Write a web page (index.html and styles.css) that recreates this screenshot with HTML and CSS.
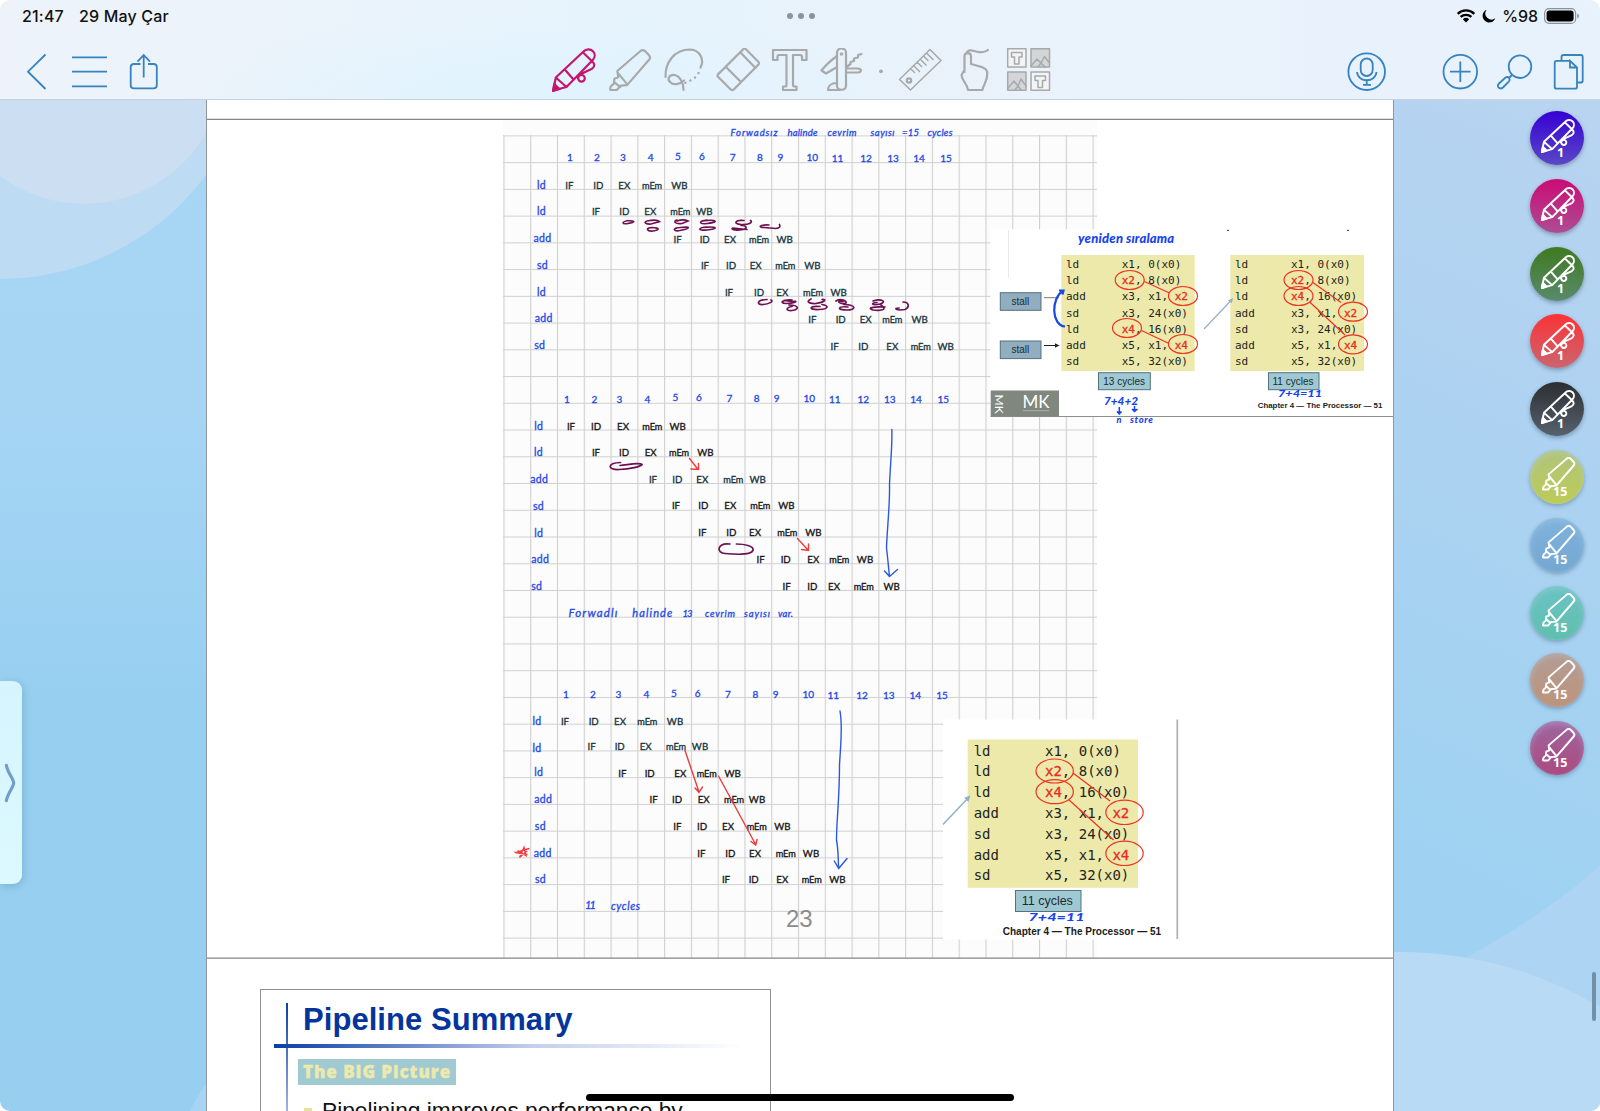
FILE: index.html
```html
<!DOCTYPE html>
<html lang="tr">
<head>
<meta charset="utf-8">
<title>Notes</title>
<link rel="stylesheet" href="styles.css">
</head>
<body>
<svg class="defs" width="0" height="0">
  <defs>
    <symbol id="pen" viewBox="0 0 44 44">
      <path d="M1.2 42.5 L3.8 29.5 L31.5 3.5 C34 .8 38.5 .6 41 3.2 C43.4 5.8 43 9.6 40.8 12 L14.5 39 Z M3.8 29.5 L14.5 39 M12.8 21.5 L21.5 31.500 M31 4.500 L39.8 13 M39.8 13 C43 16 43.200 18.500 40 20.800 L30 25.500 C25.500 27.500 25 30 26.500 31.500 M32.800 30.300 A3.300 3.300 0 1 1 26.200 30.300 A3.300 3.300 0 1 1 32.800 30.300"/>
      <path class="tip" d="M1 43 L2.300 36 L7.500 41 Z"/>
    </symbol>
    <symbol id="marker" viewBox="0 0 44 44">
      <path d="M8.500 22.500 L32.500 1.800 C34 .8 35.500 .8 37 2.200 L41 6.500 C42.300 8 42.300 9.500 41 11 L18.500 37 L12 37.500 L8 42 L1.500 42 C.8 40 2 37.500 5 35.500 L5.500 30.500 L9.500 29 Z M9.500 25 L18.500 36 M5.500 34 L11.500 39"/>
    </symbol>
  </defs>
</svg>

<header class="topbar">
  <div class="status">
    <div class="clock"><span>21:47</span><span>29 May Çar</span></div>
    <div class="dots"><i></i><i></i><i></i></div>
    <div class="indicators">
      <svg width="20" height="14" viewBox="0 0 20 14"><path class="wave" d="M1.700 4.800 A12 12 0 0 1 18.300 4.800 M4.600 7.900 A8 8 0 0 1 15.400 7.900"/><path d="M10 13.500 L6.800 10.200 A4.700 4.700 0 0 1 13.200 10.200 Z"/></svg>
      <svg width="14" height="14" viewBox="0 0 14 14"><path d="M4.500 .8 A6.600 6.600 0 1 0 13.300 9.300 A6.200 6.200 0 0 1 4.500 .8 Z"/></svg>
      <span>%98</span>
      <svg width="36" height="16" viewBox="0 0 36 16"><rect class="shell" x=".6" y=".6" width="31" height="14.800" rx="4.500"/><rect x="2.600" y="2.600" width="27" height="10.800" rx="2.800"/><path class="nub" d="M33.300 5.500 C35.500 6.500 35.500 9.500 33.300 10.500 Z"/></svg>
    </div>
  </div>
  <div class="toolbar">
    <div class="group left">
      <svg width="140" height="44" viewBox="22 48 140 44"><path d="M45.500 54.500 L28 71.700 L45.500 89 M72 57.300 H107 M72 71.700 H107 M72 86.300 H107 M140.500 64 H134 Q130.700 64 130.700 67.300 V85 Q130.700 88.400 134 88.400 H153.500 Q156.800 88.400 156.800 85 V67.300 Q156.800 64 153.500 64 H148 M143.700 77.500 V55 M137.500 61.700 L143.700 55 L150 61.700"/></svg>
    </div>
    <div class="group tools">
      <svg class="active" width="54" height="44" viewBox="-5 0 54 44"><use href="#pen" width="44" height="44"/></svg>
      <svg width="54" height="44" viewBox="-8 -1 54 44"><use href="#marker" width="43" height="43"/></svg>
      <svg width="54" height="44" viewBox="655 48 54 44"><path d="M665.500 77 C665 63 674 49.500 690 49.500 C700.500 50 704.500 60 700.500 67.500 M683.500 90 C683.500 83 680 76 674.500 75 C669 74.500 667 79 670 82 C674 86 680 84 684 80.500"/><path class="dash" d="M698.500 73 L695 77.500 L689 81.500 L682 84"/></svg>
      <svg width="54" height="44" viewBox="709 48 54 44"><path d="M743.500 49 Q744.600 48 745.700 49 L758.500 62 Q759.500 63.200 758.500 64.400 L733.500 89.700 Q732.300 90.700 731 89.700 L718 76.800 Q717 75.600 718 74.400 Z M725.500 66.500 L741 82 M740.500 52.500 L755.500 68"/></svg>
      <svg width="54" height="44" viewBox="763 48 54 44"><path d="M773 50 H806.500 V60 H802 V56.500 Q802 55 800.500 55 H793 V85 Q793 86.500 795 86.500 H796.500 V90 H783 V86.500 H785 Q786.500 86.500 786.500 85 V55 H779 Q777.500 55 777.500 56.500 V60 H773 Z"/></svg>
      <svg width="54" height="44" viewBox="817 48 54 44"><path d="M837 53 C837 47 846 47 846 53 V86 C846 91 837 91 837 86 Z M837 56 C830 61 825 66 821.500 70.500 L826 73.500 L837 67 M837 83 C831 83 828 86 828 90 H840 M846 68.500 H858 Q861 69 861 70.500 Q861 72 858 72.500 H846 M847 66.500 L850.500 64 V62 L854 61 V58.500 L858 57.500 V55 L861.500 54"/><circle cx="841.500" cy="54" r=".7"/></svg>
      <svg width="24" height="44" viewBox="871 48 24 44"><circle class="fill" cx="881" cy="71.300" r="1.900"/></svg>
      <svg width="54" height="44" viewBox="895 48 54 44"><path class="thin" d="M930 49.500 L941 60.500 L910.500 90 L899.500 79.500 Z M926.500 53 L933 59.500 M923.500 56 L928 60.500 M920 59 L926 65 M917 62 L921.500 66.500 M913.500 65.500 L919.500 71.500 M910.500 68.500 L914.500 72.500"/><circle cx="909" cy="80.500" r="2.200"/></svg>
      <svg width="54" height="44" viewBox="949 48 54 44"><path d="M964.500 72 V56.500 C964.500 52 971 52 971 56.500 V64 L980 66.500 C985.500 68 987.300 70 987.300 73 C987.500 83 983 84 982.500 90 H968 C967.500 84 962 81 961.500 75 L964.500 70 M966.500 53 C969 47.500 975 52 980 52.200 Q985 52.500 988 50"/></svg>
      <svg width="54" height="44" viewBox="1003 48 54 44"><path class="tilebg" d="M1007.700 48.700 H1026 V67 H1007.700 Z M1031 72 H1049.500 V90.300 H1031 Z"/><path class="tiledark" d="M1031 48.700 H1049.500 V67 H1031 Z M1007.700 72 H1026 V90.300 H1007.700 Z"/><path class="thin" d="M1011.500 52.500 H1022 V57 H1019 V64 H1014.500 V57 H1011.500 Z M1035 76 H1045.500 V80.500 H1042.500 V87.500 H1038 V80.500 H1035 Z M1031 66 L1037 59 L1041 63 L1044.500 56.500 L1049.500 63 M1038 67 L1041 63 L1045 67 M1008 88 L1014 81 L1018 86 L1021 79 L1026 86 M1015 90 L1018 86 L1021 90"/></svg>
    </div>
    <div class="group right">
      <svg width="252" height="44" viewBox="1342 48 252 44"><circle cx="1366.700" cy="71.700" r="18.300"/><rect x="1360.700" y="58.500" width="12" height="17.500" rx="6"/><path d="M1357 72 C1358 83 1375.500 83 1376.500 72 M1366.700 80 V84.500 M1363 84.800 H1371"/><circle cx="1460.300" cy="71.700" r="16.800"/><path d="M1450 71.700 H1470.600 M1460.300 61.400 V82"/><circle cx="1520" cy="66.700" r="11.300"/><path d="M1512 75 L1509 78 M1499 83.500 L1505.500 77.500 Q1507.500 76.300 1509 78 Q1510.200 79.700 1509 81.300 L1503 87.500 Q1500.500 89.500 1498.500 87.300 Q1497 85.500 1499 83.500 Z M1561.500 60 V57 Q1561.500 55 1563.500 55 H1581 Q1582.700 55 1582.700 57 V80.500 Q1582.700 82.500 1581 82.500 H1577.500 M1570 60.800 H1556.500 Q1554.700 60.800 1554.700 62.600 V87 Q1554.700 88.700 1556.500 88.700 H1575 Q1577 88.700 1577 87 V67.500 L1570 60.800 V67.500 H1577"/></svg>
    </div>
  </div>
</header>

<main class="desk">
  <aside class="margin">
    <svg width="206" height="1011" viewBox="0 100 206 1011"><circle class="c1" cx="0" cy="23" r="256"/><circle class="c2" cx="84" cy="64" r="140"/><path class="c3" d="M190 1111 Q197 1096 206 1084 V1111 Z"/></svg>
    <div class="handle"><svg width="22" height="44" viewBox="0 0 22 44"><path d="M6.500 4 C8 12 14 18 14 22 C14 26 8 32 6.500 40"/></svg></div>
  </aside>

  <section class="paper">
    <svg class="sheet" width="1186" height="859" viewBox="207 100 1186 859">
      <defs>
        <pattern id="grid" x="503.400" y="135.400" width="26.780" height="26.740" patternUnits="userSpaceOnUse"><path class="gridline" d="M.5 0 V27 M0 .5 H27"/></pattern>
        <marker id="dot" viewBox="0 0 6 6" refX="4" refY="3" markerWidth="4.500" markerHeight="4.500" orient="auto"><path fill="#222" stroke="none" d="M0 0 L6 3 L0 6 Z"/></marker>
        <marker id="soft" viewBox="0 0 6 6" refX="4" refY="3" markerWidth="4" markerHeight="4" orient="auto"><path fill="#8fb0c6" stroke="none" d="M0 0 L6 3 L0 6 Z"/></marker>
      </defs>
      <rect x="503" y="119" width="594" height="839" fill="#fcfcfc"/>
      <rect x="503" y="135" width="594" height="823" fill="url(#grid)"/>
      <path class="pageline" d="M207 119.300 H1393 M207 958.200 H1393"/>

      <g class="pen blue">
        <g class="note"><text x="730.500" y="136" textLength="47">Forwadsız</text><text x="787.500" y="136" textLength="30">halinde</text><text x="827.500" y="136" textLength="29">cevrim</text><text x="870.500" y="136" textLength="24">sayısı</text><text x="902" y="136" textLength="17">=15</text><text x="927.500" y="136" textLength="25">cycles</text></g>
        <text class="num" y="161.300"><tspan x="570">1</tspan><tspan x="597">2</tspan><tspan x="623">3</tspan><tspan x="650.700">4</tspan><tspan x="678" dy="-1.500">5</tspan><tspan x="702">6</tspan><tspan x="732.700" dy="1">7</tspan><tspan x="760">8</tspan><tspan x="780.300">9</tspan><tspan x="812.300">10</tspan><tspan x="837.500" dy="1">11</tspan><tspan x="866">12</tspan><tspan x="893">13</tspan><tspan x="919">14</tspan><tspan x="946">15</tspan></text>
        <g class="op"><text x="541.500" y="188.500">ld</text><text x="541.500" y="215">ld</text><text x="542.500" y="242">add</text><text x="542.500" y="269">sd</text><text x="541.500" y="296">ld</text><text x="543.700" y="322">add</text><text x="539.700" y="349.300">sd</text></g>
        <text class="num" y="402.500"><tspan x="567">1</tspan><tspan x="594.300">2</tspan><tspan x="619.300">3</tspan><tspan x="647.300">4</tspan><tspan x="675.300" dy="-1.500">5</tspan><tspan x="699">6</tspan><tspan x="729.300" dy="1">7</tspan><tspan x="756.700">8</tspan><tspan x="776.700">9</tspan><tspan x="809.300">10</tspan><tspan x="834.700" dy="1">11</tspan><tspan x="863.300">12</tspan><tspan x="889.700">13</tspan><tspan x="916">14</tspan><tspan x="943.300">15</tspan></text>
        <g class="op"><text x="538.700" y="429.700">ld</text><text x="538.500" y="456">ld</text><text x="539.300" y="483">add</text><text x="538.500" y="509.700">sd</text><text x="538.700" y="536.500">ld</text><text x="540.300" y="563">add</text><text x="536.700" y="590.300">sd</text></g>
        <g class="note"><text x="568.500" y="617" font-size="11.500" textLength="49">Forwadlı</text><text x="632.300" y="617" font-size="11" textLength="40">halinde</text><text x="682.500" y="616.500" textLength="10">13</text><text x="705" y="617" textLength="30">cevrim</text><text x="744" y="617" textLength="26">sayısı</text><text x="778" y="617" textLength="15">var.</text></g>
        <text class="num" y="698"><tspan x="566">1</tspan><tspan x="593">2</tspan><tspan x="618.300">3</tspan><tspan x="646.300">4</tspan><tspan x="674" dy="-1.500">5</tspan><tspan x="697.700">6</tspan><tspan x="728" dy="1">7</tspan><tspan x="755.300">8</tspan><tspan x="775.700">9</tspan><tspan x="808.300">10</tspan><tspan x="833.300" dy="1">11</tspan><tspan x="862">12</tspan><tspan x="888.700">13</tspan><tspan x="915.300">14</tspan><tspan x="942">15</tspan></text>
        <g class="op"><text x="537" y="725">ld</text><text x="537" y="751.700">ld</text><text x="538.700" y="775.700">ld</text><text x="543.300" y="803">add</text><text x="540.300" y="830">sd</text><text x="542.700" y="856.500">add</text><text x="540.500" y="883">sd</text></g>
        <g class="note"><text x="585" y="909" font-size="11" textLength="11">11</text><text x="611" y="910" font-size="10.500" textLength="29">cycles</text></g>
      </g>

      <g class="pen teal stages">
        <text y="188.500"><tspan x="569.300">IF</tspan><tspan x="598.300">ID</tspan><tspan x="624.300">EX</tspan><tspan class="m" x="652">mEm</tspan><tspan x="679.300">WB</tspan></text>
        <text y="215.300"><tspan x="596">IF</tspan><tspan x="624.300">ID</tspan><tspan x="650.300">EX</tspan><tspan class="m" x="680.300">mEm</tspan><tspan x="704.300">WB</tspan></text>
        <text y="242.700"><tspan x="677.700">IF</tspan><tspan x="704.700">ID</tspan><tspan x="730">EX</tspan><tspan class="m" x="759">mEm</tspan><tspan x="784.700">WB</tspan></text>
        <text y="269.300"><tspan x="705">IF</tspan><tspan x="731">ID</tspan><tspan x="755.700">EX</tspan><tspan class="m" x="785.300">mEm</tspan><tspan x="812.300">WB</tspan></text>
        <text y="295.900"><tspan x="729">IF</tspan><tspan x="759">ID</tspan><tspan x="782.300">EX</tspan><tspan class="m" x="813">mEm</tspan><tspan x="838.700">WB</tspan></text>
        <text y="322.600"><tspan x="812.300">IF</tspan><tspan x="840.700">ID</tspan><tspan x="865.700">EX</tspan><tspan class="m" x="892.300">mEm</tspan><tspan x="919.700">WB</tspan></text>
        <text y="349.500"><tspan x="834.700">IF</tspan><tspan x="863.300">ID</tspan><tspan x="892.300">EX</tspan><tspan class="m" x="920.700">mEm</tspan><tspan x="945.700">WB</tspan></text>
        <text y="482.700"><tspan x="653">IF</tspan><tspan x="677.300">ID</tspan><tspan class="k" x="702.300">EX</tspan><tspan class="m" x="733.300">mEm</tspan><tspan x="757.700">WB</tspan></text>
        <text y="725.300"><tspan x="565">IF</tspan><tspan x="593.700">ID</tspan><tspan x="620">EX</tspan><tspan class="m" x="647.300">mEm</tspan><tspan x="675">WB</tspan></text>
        <text y="749.700"><tspan x="591.700">IF</tspan><tspan x="619.700">ID</tspan><tspan x="645.700">EX</tspan><tspan class="m" x="676">mEm</tspan><tspan x="700">WB</tspan></text>
      </g>
      <g class="pen black stages">
        <text y="429.700"><tspan x="571">IF</tspan><tspan x="596">ID</tspan><tspan x="623">EX</tspan><tspan class="m" x="652.300">mEm</tspan><tspan x="677.700">WB</tspan></text>
        <text y="456"><tspan x="596">IF</tspan><tspan x="624">ID</tspan><tspan x="650.700">EX</tspan><tspan class="m" x="679">mEm</tspan><tspan x="705.300">WB</tspan></text>
        <text y="509.300"><tspan x="676">IF</tspan><tspan x="703.300">ID</tspan><tspan x="730.300">EX</tspan><tspan class="m" x="760.300">mEm</tspan><tspan x="786.300">WB</tspan></text>
        <text y="536"><tspan x="702.300">IF</tspan><tspan x="731.300">ID</tspan><tspan x="755">EX</tspan><tspan class="m" x="787.300">mEm</tspan><tspan x="813.300">WB</tspan></text>
        <text y="563"><tspan x="760.700">IF</tspan><tspan x="785.700">ID</tspan><tspan x="813.300">EX</tspan><tspan class="m" x="839.300">mEm</tspan><tspan x="865">WB</tspan></text>
        <text y="589.700"><tspan x="786.700">IF</tspan><tspan x="812.300">ID</tspan><tspan x="834">EX</tspan><tspan class="m" x="863.700">mEm</tspan><tspan x="891.700">WB</tspan></text>
        <text y="776.500"><tspan x="622.300">IF</tspan><tspan x="649.700">ID</tspan><tspan x="680.300">EX</tspan><tspan class="m" x="706.700">mEm</tspan><tspan x="732.700">WB</tspan></text>
        <text y="803"><tspan x="653.700">IF</tspan><tspan x="677">ID</tspan><tspan x="703.700">EX</tspan><tspan class="m" x="734">mEm</tspan><tspan x="757">WB</tspan></text>
        <text y="830"><tspan x="677.300">IF</tspan><tspan x="702">ID</tspan><tspan x="728">EX</tspan><tspan class="m" x="756.700">mEm</tspan><tspan x="782.300">WB</tspan></text>
        <text y="856.500"><tspan x="701.300">IF</tspan><tspan x="730.300">ID</tspan><tspan x="755">EX</tspan><tspan class="m" x="785.700">mEm</tspan><tspan x="811">WB</tspan></text>
        <text y="883.300"><tspan x="726">IF</tspan><tspan x="753.700">ID</tspan><tspan x="782.300">EX</tspan><tspan class="m" x="811.700">mEm</tspan><tspan x="837.300">WB</tspan></text>
      </g>
      <text class="pageno" x="786" y="927.300">23</text>

      <path class="scribble" d="M628 220.500 C621 222 622 224.500 628 223.500 C636 222 635 220.500 628 220.500
        M652 220.500 C643 220.500 643 224.500 651 224 L659.500 221.500 C658 220 655 219.500 647 221 M652 227.500 C645 228 647 231.500 653 231 C659 230 661 228 652 227.500
        M677 220 C673 221 675 224.500 682 223.500 L688 221 C685 219.500 681 219.500 677 221 M680 227.500 C672 228 673 232 680 230.500 C690 228.500 692 226 680 227.500
        M707 220 C698 221 699 224.500 707 223.500 C718 222.500 719 219 702 221 M707 227 C698 227.500 697 231 707 230 C718 229 719 226 702 227.500
        M744 220.500 C735 219.500 733 224 741 224.500 C750 225 753 222 750.500 220.500 M741 225.500 C745 225 749 228 743 229.500 C734 231 730 229 733 228 L747 229.500
        M769 225 C759 224.500 758 227.500 764 227.500 L776 228.500 Q781 228 779.500 224.500
        M767 299.500 C757 299.500 756 305 763 304.500 C769 304 774 301.500 771 300 M792 300 C784 299 778 303 786 303.500 C794 303.500 800 300.500 792 301.500 L784 300.500 M792 306.500 C786 307.500 785 311 792 310.500 C800 309.500 799 305 789 305
        M811 299 C806 301 808 304 816 303.500 C825 302 827 299 822 299.500 M822 304.500 C829 305.500 829 309 819 309.500 C808 310 809 305.500 820 306.500 M836 301 C841 298 847 301 846 303 C840 305 835 300 843 301.500 M844 304.500 C857 305 856 310 847 310 C836 310 838 306 848 307
        M873 301 C882 298 887 302 880 304 C872 306 870 303 877 302.500 M881 305 C889 310 879 311 873 310 C867 308 872 306.500 885 307 M903 302 C909 302 910 307 905 309.500 C896 311 893 308 899 308"/>
      <path class="scribble" d="M620.500 462.500 C607 463 607 470 619 469.500 C630 469 641 466.500 642 464.500 C639 462 627 465 620 465.500 M730 544 C717 542.500 716 553 725 553.500 C736 554.500 752 555 753 550 C754 546 744 544 736.500 544"/>
      <path class="redink" d="M689.500 458.500 L697.700 469 M698.500 463.500 V469.500 L691 469 M797.500 538.500 L808 550 M808.500 544 V550.500 L801.500 549.500 M685 750.500 L699 792 M695 788 L699 792.300 L702.500 787 M718.500 776 L755.700 844.500 M751 841.500 L755.700 845 L757 839.500"/>
      <path class="star" d="M529.500 848.500 C522 850 516 853 515.500 852.500 L527.500 854.500 M519.500 857.500 L524 847.500 L526 855.500 L517.500 850.500 M519.500 857.500 L527 851"/>
      <path class="blueink" d="M891.800 429.500 C892.500 445 890.500 460 889.500 485 C890 505 887 530 886.500 548 C888 560 888.500 568 889.500 576.500 M884.500 571 L889.500 576.500 L897.500 569.500 M840 711 C843 728 840.500 745 839.500 765 C839.500 800 836.500 820 836.500 840 C838.500 850 838 860 838.700 868.500 M834.300 861 L838.700 868.500 L847 858.500"/>

      <!-- lecture slide, top right -->
      <rect x="990.500" y="229.300" width="402.500" height="187" fill="#fff"/>
      <path stroke="#8e8e8e" d="M990.500 416.500 H1393"/>
      <path stroke="#e6e9f4" d="M1008.500 230 V278"/>
      <path stroke="#555" stroke-width="1.200" d="M1227 230.300 H1229 M1347 230.300 H1349"/>
      <path fill="#ece9ab" d="M1061.300 255 H1194.700 V371 H1061.300 Z M1230.300 255 H1364 V371 H1230.300 Z"/>
      <g class="box grey"><rect x="1000.300" y="292.700" width="40.700" height="17.600"/><rect x="1000.300" y="341" width="40.700" height="17.600"/></g>
      <g class="box aqua"><rect x="1098.500" y="372.700" width="51.800" height="17"/><rect x="1268.500" y="372.700" width="50.500" height="17"/></g>
      <g class="label"><text x="1011.500" y="305">stall</text><text x="1011.500" y="352.700">stall</text><text x="1103.300" y="385">13 cycles</text><text x="1272.500" y="385">11 cycles</text></g>
      <g class="code">
        <text x="1066" y="268">ld</text><text x="1121.700" y="268">x1, 0(x0)</text>
        <text x="1066" y="284">ld</text><text x="1121.700" y="284"><tspan class="hot">x2</tspan>, 8(x0)</text>
        <text x="1066" y="300.300">add</text><text x="1121.700" y="300.300">x3, x1, <tspan class="hot">x2</tspan></text>
        <text x="1066" y="316.700">sd</text><text x="1121.700" y="316.700">x3, 24(x0)</text>
        <text x="1066" y="332.700">ld</text><text x="1121.700" y="332.700"><tspan class="hot">x4</tspan>, 16(x0)</text>
        <text x="1066" y="349">add</text><text x="1121.700" y="349">x5, x1, <tspan class="hot">x4</tspan></text>
        <text x="1066" y="365">sd</text><text x="1121.700" y="365">x5, 32(x0)</text>
        <text x="1235" y="268">ld</text><text x="1291" y="268">x1, 0(x0)</text>
        <text x="1235" y="284">ld</text><text x="1291" y="284"><tspan class="hot">x2</tspan>, 8(x0)</text>
        <text x="1235" y="300.300">ld</text><text x="1291" y="300.300"><tspan class="hot">x4</tspan>, 16(x0)</text>
        <text x="1235" y="316.700">add</text><text x="1291" y="316.700">x3, x1, <tspan class="hot">x2</tspan></text>
        <text x="1235" y="332.700">sd</text><text x="1291" y="332.700">x3, 24(x0)</text>
        <text x="1235" y="349">add</text><text x="1291" y="349">x5, x1, <tspan class="hot">x4</tspan></text>
        <text x="1235" y="365">sd</text><text x="1291" y="365">x5, 32(x0)</text>
      </g>
      <g class="ring"><ellipse cx="1129.700" cy="280" rx="14.500" ry="9.500"/><ellipse cx="1183" cy="296" rx="14.500" ry="9.500"/><ellipse cx="1127" cy="328" rx="14.500" ry="9.500"/><ellipse cx="1183" cy="344" rx="14.500" ry="9.500"/><ellipse cx="1298.500" cy="280" rx="14.500" ry="9.500"/><ellipse cx="1298.500" cy="296" rx="14.500" ry="9.500"/><ellipse cx="1353" cy="311.700" rx="14.500" ry="9.500"/><ellipse cx="1353" cy="344.300" rx="14.500" ry="9.500"/><path d="M1144.300 281.500 L1169 292.700 M1141.500 330.500 L1169 343.500 M1312.500 282.300 L1341 302.500 M1310 302.300 L1345 335"/></g>
      <path stroke="#777" d="M1044 297.700 H1059"/>
      <path stroke="#222" d="M1044 345.500 H1058" marker-end="url(#dot)"/>
      <path stroke="#8fb0c6" stroke-width="1.200" d="M1204 329 L1232 299.500" marker-end="url(#soft)"/>
      <path class="curve" d="M1065 326.500 C1051 325 1051 298 1063 291 M1059 290.500 L1063.500 290.500 L1062.500 294.500"/>
      <rect x="990.700" y="390.500" width="68.300" height="26" fill="#7f877f"/>
      <g fill="#fff"><text class="mk" x="1022.500" y="407.500" textLength="27">MK</text><text class="mk side" transform="translate(995 394.500) rotate(90)">MK</text></g>
      <path stroke="#b8bdb8" stroke-width=".8" d="M1023 410.700 H1049"/>
      <text class="chapter" font-size="8" x="1257.700" y="407.700" textLength="124.700" lengthAdjust="spacingAndGlyphs">Chapter 4 — The Processor — 51</text>
      <g class="brush"><text x="1078" y="243" textLength="45" font-size="13">yeniden</text><text x="1126" y="243" textLength="48" font-size="13">sıralama</text><text x="1104" y="405" textLength="34" lengthAdjust="spacingAndGlyphs">7+4+2</text><text x="1116.500" y="423" font-size="9">n</text><text x="1130" y="423" textLength="23" font-size="9.500">store</text><text x="1278" y="396.500" textLength="44" lengthAdjust="spacingAndGlyphs" font-size="10">7+4=11</text><path d="M1119.300 407 V414 M1117 411.500 L1119.300 414 L1121.500 411.500 M1134.500 406 V410.500 M1132 409 L1134.500 411.500 L1137.500 409"/></g>

      <!-- lecture slide, bottom right -->
      <rect x="943" y="719.500" width="234.500" height="220" fill="#fff"/>
      <path stroke="#b0b0b0" stroke-width="1.700" d="M1177.300 719.500 V939"/>
      <rect x="967.700" y="739.500" width="170.300" height="148.300" fill="#ece9ab"/>
      <g class="box aqua"><rect x="1015.500" y="890.500" width="65.500" height="21"/></g>
      <text class="label big" x="1021.700" y="905.300">11 cycles</text>
      <g class="code large">
        <text x="973.700" y="756">ld</text><text x="1045" y="756">x1, 0(x0)</text>
        <text x="973.700" y="776.300">ld</text><text x="1045" y="776.300"><tspan class="hot">x2</tspan>, 8(x0)</text>
        <text x="973.700" y="797.300">ld</text><text x="1045" y="797.300"><tspan class="hot">x4</tspan>, 16(x0)</text>
        <text x="973.700" y="818.300">add</text><text x="1045" y="818.300">x3, x1, <tspan class="hot">x2</tspan></text>
        <text x="973.700" y="838.700">sd</text><text x="1045" y="838.700">x3, 24(x0)</text>
        <text x="973.700" y="859.700">add</text><text x="1045" y="859.700">x5, x1, <tspan class="hot">x4</tspan></text>
        <text x="973.700" y="880">sd</text><text x="1045" y="880">x5, 32(x0)</text>
      </g>
      <g class="ring"><ellipse cx="1054.700" cy="771" rx="18.700" ry="12"/><ellipse cx="1054.700" cy="791.700" rx="18.700" ry="12"/><ellipse cx="1124.500" cy="812.300" rx="18.700" ry="12.200"/><ellipse cx="1124.500" cy="853.300" rx="18.700" ry="12.200"/><path d="M1073.300 773.300 L1110 801 M1068.500 799.500 L1113.500 840"/></g>
      <path stroke="#8fb0c6" stroke-width="1.500" d="M943 824.500 L969 797" marker-end="url(#soft)"/>
      <text class="chapter" font-size="10.300" x="1002.700" y="934.700" textLength="158.500" lengthAdjust="spacingAndGlyphs">Chapter 4 — The Processor — 51</text>
      <g class="brush"><text x="1028.500" y="920.500" textLength="56" lengthAdjust="spacingAndGlyphs" font-size="11.500">7+4=11</text></g>
    </svg>

    <article class="slide">
      <i class="vline"></i><i class="hline"></i>
      <h1>Pipeline Summary</h1>
      <div><span class="tag">The BIG Picture</span></div>
      <p>Pipelining improves performance by</p>
    </article>
  </section>

  <aside class="rail">
    <svg class="waves" width="206" height="1011" viewBox="1394 100 206 1011"><path class="w1" d="M1394 991 Q1510 944 1600 866 V1111 H1394 Z"/><path class="w2" d="M1394 952 Q1505 951 1600 1007 V1111 H1394 Z"/></svg>
    <div class="presets">
      <div class="preset p1"><svg width="34" height="34"><use href="#pen"/></svg><b>1</b></div>
      <div class="preset p2"><svg width="34" height="34"><use href="#pen"/></svg><b>1</b></div>
      <div class="preset p3"><svg width="34" height="34"><use href="#pen"/></svg><b>1</b></div>
      <div class="preset p4"><svg width="34" height="34"><use href="#pen"/></svg><b>1</b></div>
      <div class="preset p5"><svg width="34" height="34"><use href="#pen"/></svg><b>1</b></div>
      <div class="preset hl p6"><svg width="34" height="34"><use href="#marker"/></svg><b>15</b></div>
      <div class="preset hl p7"><svg width="34" height="34"><use href="#marker"/></svg><b>15</b></div>
      <div class="preset hl p8"><svg width="34" height="34"><use href="#marker"/></svg><b>15</b></div>
      <div class="preset hl p9"><svg width="34" height="34"><use href="#marker"/></svg><b>15</b></div>
      <div class="preset hl p10"><svg width="34" height="34"><use href="#marker"/></svg><b>15</b></div>
    </div>
    <div class="scrollbar"></div>
  </aside>
</main>
<div class="home"></div>
</body>
</html>
```
FILE: styles.css
```css
* { box-sizing: border-box; }
body {
  margin: 0;
  width: 1600px;
  height: 1111px;
  overflow: hidden;
  position: relative;
  background: #fff;
  font-family: Inter, "Liberation Sans", sans-serif;
}
svg { display: block; fill: none; }
.defs { position: absolute; }

/* top bar */
.topbar {
  height: 100px;
  border-bottom: 1px solid #c6d3de;
  border-radius: 10px 10px 0 0;
  background:
    radial-gradient(ellipse 360px 90px at 540px 100px, #dff3fe 0, rgba(223, 243, 254, 0) 100%),
    linear-gradient(90deg, #eef3fa 0, #ebf3fb 20%, #e6f3fc 40%, #eaf2fb 65%, #e8f2fc 100%);
}
.status {
  height: 32px;
  display: grid;
  grid-template-columns: 1fr auto 1fr;
  align-items: center;
  padding: 0 20px 0 22px;
  font-size: 16px;
  font-weight: 500;
  color: #111;
}
.clock { display: flex; gap: 15px; letter-spacing: .18px; }
.dots { display: flex; gap: 4.300px; }
.dots i { width: 6.500px; height: 6.500px; border-radius: 50%; background: #8b949c; }
.indicators { display: flex; justify-content: flex-end; align-items: center; gap: 6px; }
.indicators svg { fill: #000; }
.indicators span { letter-spacing: -.1px; }
.indicators .wave { fill: none; stroke: #000; stroke-width: 2.300; }
.indicators .shell { fill: none; stroke: #8b9299; stroke-width: 1.200; }
.indicators .nub { fill: #8b9299; }
.toolbar {
  display: grid;
  grid-template-columns: 547px 1fr 258px;
  padding-top: 16px;
}
.group { display: flex; }
.group.left { padding-left: 22px; }
.left svg, .right svg { stroke: #3583c0; stroke-width: 1.800; }
.tools svg { stroke: #a7a9ab; stroke-width: 2.200; stroke-linejoin: round; stroke-linecap: round; }
.tools .active { stroke: #c3166f; color: #c3166f; }
.tip { fill: currentColor; }
.dash { stroke-width: 2.400; stroke-dasharray: .1 5.500; }
.tools .fill { fill: #a7a9ab; stroke: none; }
.tools .thin { stroke-width: 1.500; }
.tilebg { fill: #f3f4f5; stroke-width: 1.500; }
.tiledark { fill: #d3d6d9; stroke-width: 1.500; }

/* workspace */
.desk { display: flex; height: 1011px; }
.margin {
  width: 206px;
  position: relative;
  background: linear-gradient(180deg, #a8d7f5 0, #a6d5f4 30%, #97cff1 60%, #98cff0 100%);
  border-bottom-left-radius: 10px;
  overflow: hidden;
}
.c1 { fill: #bddbf2; }
.c2 { fill: #ccdef2; }
.c3 { fill: #a6d5f4; }
.handle {
  position: absolute;
  left: 0;
  top: 581px;
  width: 21.500px;
  height: 203px;
  border-radius: 0 9px 9px 0;
  background: linear-gradient(#d6f4fe, #dcf9ff);
  box-shadow: 1px 2px 8px rgba(50, 110, 150, .3);
  display: flex;
  align-items: center;
}
.handle path { stroke: #6f9fca; stroke-width: 3.200; stroke-linecap: round; }
.paper {
  width: 1188px;
  background: #fff;
  border: solid #8f979d;
  border-width: 0 1px;
  overflow: hidden;
}

/* notebook sheet */
.gridline { stroke: #d0d0d0; stroke-width: 1.200; }
.pageline { stroke: #858585; stroke-width: 1.300; }
.pen { font-family: Lato, "Liberation Sans", sans-serif; stroke-width: .32; }
.blue { fill: #2449e8; stroke: #2449e8; }
.teal { fill: #17363f; stroke: #17363f; }
.black { fill: #161616; stroke: #161616; }
.k { fill: #161616; }
.num, .op, .stages { text-anchor: middle; }
.num { font-size: 10px; }
.op { font-size: 10.500px; letter-spacing: .3px; }
.note { font-size: 9.500px; font-style: italic; }
.stages { font-size: 9.700px; }
.m { font-size: 9.200px; letter-spacing: -.1px; }
.pageno { font: 24px "Liberation Sans", sans-serif; fill: #8d8d8d; }
.scribble { stroke: #6e1152; stroke-width: 1.700; stroke-linecap: round; }
.redink { stroke: #ee3b3b; stroke-width: 1.400; stroke-linecap: round; }
.star { stroke: #f03a3f; stroke-width: 1.400; }
.blueink { stroke: #2c58e0; stroke-width: 1.400; stroke-linecap: round; }
.curve { stroke: #1a48e6; stroke-width: 2.200; }
.box { stroke: #56707c; stroke-width: 1; }
.grey { fill: #90aebf; }
.aqua { fill: #9fc9d2; }
.label { font: 10px "Liberation Sans", sans-serif; fill: #1c2a30; }
.label.big { font-size: 12.500px; }
.code { font: 11px "DejaVu Sans Mono", monospace; fill: #23231c; }
.code text { white-space: pre; }
.code.large { font-size: 14px; }
.hot { fill: #ea2a1c; stroke: #ea2a1c; stroke-width: .3; }
.ring { stroke: #ee3320; stroke-width: 1.200; }
.mk { font-family: Lato, sans-serif; font-size: 17px; }
.mk.side { font-size: 12px; }
.chapter { font-family: "Liberation Sans", sans-serif; font-weight: 700; fill: #1c1c1c; }
.brush { font: italic 900 11px Lato, sans-serif; fill: #1743ee; }
.brush path { stroke: #1743ee; stroke-width: 1.500; }

/* next page */
.slide {
  position: relative;
  margin: 30px 0 0 53px;
  width: 511px;
  height: 130px;
  padding: 10px 0 0 42px;
  border: 1px solid #8f8f8f;
  border-bottom: 0;
  font-family: "Liberation Sans", sans-serif;
}
.vline { position: absolute; left: 25px; top: 13px; width: 2px; height: 120px; background: linear-gradient(#0b3fa5, #b5c1e4); }
.hline { position: absolute; left: 13px; top: 54px; width: 470px; height: 4px; background: linear-gradient(90deg, #0a3ea6, #c5cfec 55%, #fff); }
.slide h1 { margin: 0; font-size: 31px; line-height: 40px; font-weight: 700; color: #04359c; letter-spacing: .05px; }
.slide div { display: flex; margin: 19px 0 0 -5px; }
.tag {
  height: 26px;
  width: 158px;
  padding-left: 5px;
  background: #a0c9d2;
  color: #ebe9ae;
  font: 800 17px/25px "Open Sans", sans-serif;
  letter-spacing: .95px;
  -webkit-text-stroke: .4px #ebe9ae;
  white-space: nowrap;
}
.slide p { display: flex; gap: 10px; margin: 12px 0 0 1px; font-size: 22.700px; line-height: 26px; color: #111; white-space: nowrap; }
.slide p::before { content: ""; width: 8px; height: 8px; margin-top: 11px; background: #e6e29c; }

/* preset rail */
.rail {
  width: 206px;
  position: relative;
  display: flex;
  justify-content: flex-end;
  padding: 11px 16px 0 0;
  background: linear-gradient(205deg, #b8d4f0 0, #add2f1 35%, #9fd2f2 75%, #9fd2f2 100%);
  border-bottom-right-radius: 10px;
  overflow: hidden;
}
.waves { position: absolute; left: 0; top: 0; }
.w1 { fill: #add4f3; }
.w2 { fill: #b9daf4; }
.presets { display: flex; flex-direction: column; gap: 13.800px; position: relative; }
.preset {
  width: 54px;
  height: 54px;
  border-radius: 50%;
  position: relative;
  padding: 8px 0 0 11px;
  color: #fff;
  box-shadow: 0 2px 4px rgba(40, 60, 90, .4);
}
.preset svg { stroke: #fff; stroke-width: 2.500; stroke-linejoin: round; }
.preset b { position: absolute; left: 27px; top: 34px; font: 700 12.500px/15px "Open Sans", sans-serif; }
.hl { padding: 7px 0 0 12px; box-shadow: 0 2px 4px rgba(40, 60, 90, .35), inset 0 3px 6px rgba(190, 215, 235, .3); }
.hl b { left: 23px; }
.p1 { background: linear-gradient(#3600d6, #5a48c4); }
.p2 { background: linear-gradient(#cb0b74, #ad4d94); }
.p3 { background: linear-gradient(#3f7a20, #5a8a6c); }
.p4 { background: linear-gradient(#fb3335, #cb6570); }
.p5 { background: linear-gradient(#2c2e31, #56626e); }
.p6 { background: linear-gradient(#b0c47c, #bdcb57); }
.p7 { background: linear-gradient(#7fb2dc, #74a8d2); }
.p8 { background: linear-gradient(#6bc3c3, #5fbfae); }
.p9 { background: linear-gradient(#b39c94, #bd947c); }
.p10 { background: linear-gradient(#9e66a0, #ab4a80); }
.scrollbar { position: absolute; right: 4px; top: 872px; width: 4px; height: 49px; border-radius: 2px; background: #7290a9; }
.home { position: absolute; left: 586px; top: 1093.500px; width: 428px; height: 7.500px; border-radius: 4px; background: #000; }
```
